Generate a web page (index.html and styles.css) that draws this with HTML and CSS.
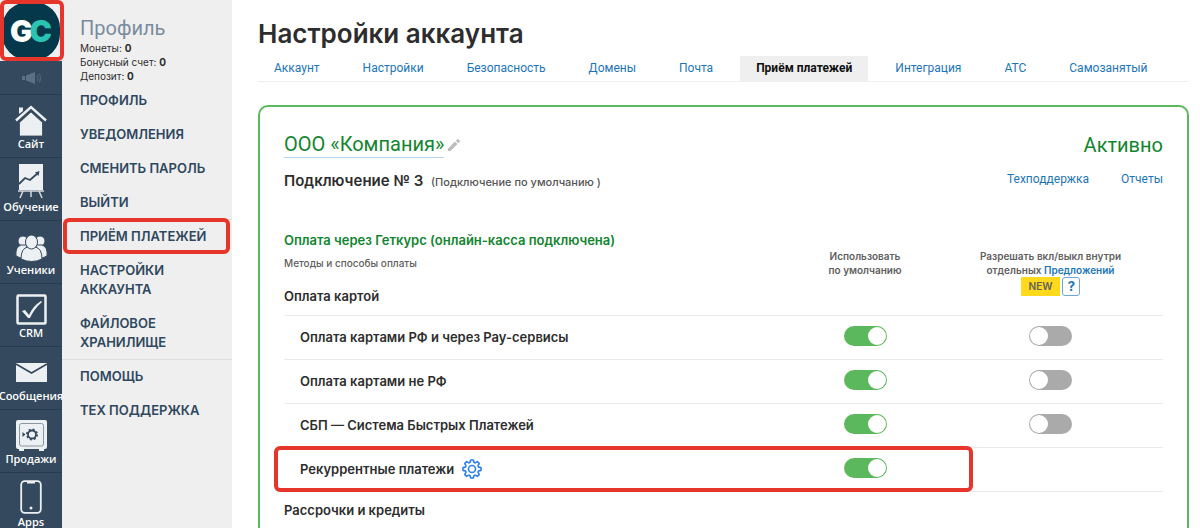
FILE: index.html
```html
<!DOCTYPE html>
<html lang="ru">
<head>
<meta charset="utf-8">
<meta name="viewport" content="width=device-width, initial-scale=1">
<title>Настройки аккаунта</title>
<link rel="stylesheet" href="styles.css">
</head>
<body>
<div class="app">
  <nav class="rail" aria-label="Разделы">
    <a class="logo marked" href="#"><span class="logo-disc"><span class="logo-g">G</span><span class="logo-c">C</span></span></a>
    <a class="rail-news" href="#" aria-label="Новости">
      <svg width="20" height="14" viewBox="0 0 20 14" fill="#5b7087"><path d="M1 5h3v4H1zM5 4.500L14 1v12L5 9.500z"/><path d="M16 4q2 3 0 6M18 2.500q3 4.500 0 9" fill="none" stroke="#4c6279" stroke-width="1.300"/></svg>
    </a>
    <a class="rail-item" href="#">
      <svg width="32" height="31" viewBox="0 0 32 31" fill="#edf0f2"><path d="M4 9V2.500h4V6z"/><path d="M1 15.500L16 2l15 13.500" fill="none" stroke="#edf0f2" stroke-width="2.400"/><path d="M4.500 17.500L16 7l11.500 10.500V31h-23z" stroke="#34495e" stroke-width=".8"/></svg>
      Сайт</a>
    <a class="rail-item" href="#">
      <svg width="26" height="36" viewBox="0 0 26 36"><path d="M1 1h24v26H1z" fill="#edf0f2"/><path d="M1 21l6-6 5 2 8-7" fill="none" stroke="#34495e" stroke-width="1.800"/><path d="M21.500 8l-1 5-3.500-3.500z" fill="#34495e"/><path d="M0 28h26M5 28l-3 7M13 28v6M21 28l3 7" fill="none" stroke="#d5dadf" stroke-width="1.500"/></svg>
      Обучение</a>
    <a class="rail-item" href="#">
      <svg width="33" height="28" viewBox="0 0 33 28" fill="#edf0f2" stroke="#34495e" stroke-width="1"><circle cx="8" cy="7" r="5"/><circle cx="25" cy="7" r="5"/><path d="M1 22q-1-9 5-11h6v13q-7 1-11-2zM32 22q1-9-5-11h-6v13q7 1 11-2z"/><path d="M6 25q0-11 7-12h7q7 1 7 12-10 5-21 0z"/><ellipse cx="16.500" cy="8" rx="6" ry="7"/></svg>
      Ученики</a>
    <a class="rail-item" href="#">
      <svg width="31" height="31" viewBox="0 0 31 31"><rect x="1.500" y="1.500" width="28" height="28" rx="1" fill="none" stroke="#edf0f2" stroke-width="2.500"/><path d="M6 17l3-1 4 5Q17 12 25 7l1 1Q18 15 14 24h-2z" fill="#edf0f2"/></svg>
      CRM</a>
    <a class="rail-item" href="#">
      <svg class="icon-mail" width="31" height="19" viewBox="0 0 31 19"><path d="M0 0h31v19H0z" fill="#edf0f2"/><path d="M0 1l15.500 9L31 1" fill="none" stroke="#34495e" stroke-width="1.600"/></svg>
      Сообщения</a>
    <a class="rail-item" href="#">
      <svg width="31" height="31" viewBox="0 0 31 31"><path d="M2 0h27q2 0 2 2v25q0 2-2 2h-1v2h-5v-2H8v2H3v-2H2q-2 0-2-2V2q0-2 2-2z" fill="#edf0f2"/><rect x="3.500" y="3.500" width="24" height="22.500" rx="2" fill="none" stroke="#8895a3" stroke-width="1"/><circle cx="16" cy="14.500" r="4" fill="none" stroke="#34495e" stroke-width="1.800"/><circle cx="16" cy="14.500" r="5.200" fill="none" stroke="#34495e" stroke-width="1.600" stroke-dasharray="2 2.080"/><path d="M6.500 12l3 2.500-3 2.500z" fill="#34495e"/></svg>
      Продажи</a>
    <a class="rail-item" href="#">
      <svg width="22" height="34" viewBox="0 0 22 34"><rect x="1.200" y="1.200" width="19.600" height="31.600" rx="3.500" fill="none" stroke="#edf0f2" stroke-width="1.800"/><path d="M7 1h8v2.500H7z" fill="#edf0f2"/><circle cx="11" cy="28" r="1.500" fill="#edf0f2"/></svg>
      Apps</a>
  </nav>

  <aside class="profile">
    <h2 class="profile-title">Профиль</h2>
    <p class="balance">Монеты: <b>0</b></p>
    <p class="balance">Бонусный счет: <b>0</b></p>
    <p class="balance">Депозит: <b>0</b></p>
    <ul class="menu">
      <li><a href="#">Профиль</a></li>
      <li><a href="#">Уведомления</a></li>
      <li><a href="#">Сменить пароль</a></li>
      <li><a href="#">Выйти</a></li>
      <li class="ruled marked"><a href="#">Приём платежей</a></li>
      <li><a href="#">Настройки аккаунта</a></li>
      <li><a href="#">Файловое хранилище</a></li>
      <li class="ruled"><a href="#">Помощь</a></li>
      <li><a href="#">Тех поддержка</a></li>
    </ul>
  </aside>

  <main class="main">
    <h1 class="page-title">Настройки аккаунта</h1>
    <nav class="tabs" aria-label="Настройки">
      <a href="#">Аккаунт</a>
      <a href="#">Настройки</a>
      <a href="#">Безопасность</a>
      <a href="#">Домены</a>
      <a href="#">Почта</a>
      <a class="active" href="#" aria-current="page">Приём платежей</a>
      <a href="#">Интеграция</a>
      <a href="#">АТС</a>
      <a href="#">Самозанятый</a>
    </nav>

    <section class="card">
      <header class="card-head">
        <div class="company">
          <a class="company-name" href="#">ООО «Компания»</a>
          <button class="icon-button" type="button" aria-label="Переименовать"><svg width="12" height="12" viewBox="0 0 12 12" fill="#bdbdbd"><path d="M0 9.500L7 2.500 9.500 5l-7 7H0zM7.800 1.700L9.300.2q.5-.4 1 0l1.500 1.500q.4.500 0 1l-1.500 1.500z"/></svg></button>
        </div>
        <span class="status">Активно</span>
      </header>
      <div class="card-sub">
        <h3 class="connection">Подключение № 3 <small>(Подключение по умолчанию )</small></h3>
        <div class="links"><a href="#">Техподдержка</a><a href="#">Отчеты</a></div>
      </div>
      <h4 class="provider">Оплата через Геткурс (онлайн-касса подключена)</h4>

      <table class="methods">
        <colgroup><col><col class="col-default"><col class="col-offers"></colgroup>
        <thead>
          <tr>
            <th class="group-head" scope="col"><span class="caption">Методы и способы оплаты</span><span class="group">Оплата картой</span></th>
            <th scope="col">Использовать<br>по умолчанию</th>
            <th scope="col">Разрешать вкл/выкл внутри<br>отдельных <a href="#">Предложений</a>
              <span class="badges"><span class="badge">NEW</span><button class="help" type="button">?</button></span></th>
          </tr>
        </thead>
        <tbody>
          <tr>
            <th scope="row">Оплата картами РФ и через Pay-сервисы</th>
            <td><input class="toggle" type="checkbox" checked aria-label="Использовать по умолчанию: карты РФ"></td>
            <td><input class="toggle" type="checkbox" aria-label="Разрешать в предложениях: карты РФ"></td>
          </tr>
          <tr>
            <th scope="row">Оплата картами не РФ</th>
            <td><input class="toggle" type="checkbox" checked aria-label="Использовать по умолчанию: карты не РФ"></td>
            <td><input class="toggle" type="checkbox" aria-label="Разрешать в предложениях: карты не РФ"></td>
          </tr>
          <tr>
            <th scope="row">СБП — Система Быстрых Платежей</th>
            <td><input class="toggle" type="checkbox" checked aria-label="Использовать по умолчанию: СБП"></td>
            <td><input class="toggle" type="checkbox" aria-label="Разрешать в предложениях: СБП"></td>
          </tr>
          <tr class="marked-row">
            <th scope="row"><span class="with-icon">Рекуррентные платежи
              <button class="icon-button" type="button" aria-label="Настроить"><svg width="20" height="20" viewBox="0 0 20 20" fill="none" stroke="#2f80ed" stroke-width="1.600" stroke-linejoin="round"><circle cx="10" cy="10" r="3.500"/><path d="M8.600 1h2.800l.5 2.300 1.400.6 2-1.300 2 2-1.300 2 .6 1.500 2.400.5v2.800l-2.400.5-.6 1.500 1.300 2-2 2-2-1.300-1.400.6-.5 2.300H8.600l-.5-2.300-1.400-.6-2 1.300-2-2 1.300-2-.6-1.500L1 11.400V8.600l2.400-.5L4 6.600l-1.300-2 2-2 2 1.300 1.400-.6z"/></svg></button></span></th>
            <td><input class="toggle" type="checkbox" checked aria-label="Использовать по умолчанию: рекуррентные платежи"></td>
            <td></td>
          </tr>
          <tr>
            <th class="group-row" scope="rowgroup" colspan="3">Рассрочки и кредиты</th>
          </tr>
        </tbody>
      </table>
    </section>
  </main>
</div>
</body>
</html>
```
FILE: styles.css
```css
* { box-sizing: border-box; }

body {
  margin: 0;
  background: #fff;
  color: #2d2d2d;
  font-family: Inter, "Open Sans", sans-serif;
  font-size: 13px;
}

h1, h2, h3, h4, p, ul { margin: 0; padding: 0; }
ul { list-style: none; }
a { color: #1b75b9; text-decoration: none; }

.app {
  display: grid;
  grid-template-columns: 62px 170px minmax(0, 1fr);
  height: 100vh;
  overflow: hidden;
}

/* Red frame around highlighted elements */
.marked, .marked-row { position: relative; }
.marked::after, .marked-row .with-icon::after {
  content: "";
  position: absolute;
  border: 4px solid #e6352b;
  border-radius: 6px;
  pointer-events: none;
}

/* Icon rail */
.rail { background: #34495e; }
.logo {
  display: grid;
  place-items: center;
  height: 61px;
  background: #efefef;
}
.logo::after { inset: 0 -2px 0 0; z-index: 1; }
.logo-disc {
  display: flex;
  align-items: center;
  justify-content: center;
  width: 58px;
  height: 58px;
  border-radius: 26px;
  background: #04384a;
  font-size: 30px;
  font-weight: 900;
}
.logo-g { color: #fff; }
.logo-c { margin-left: -3px; color: #2bc4b3; }
.rail-news {
  display: grid;
  place-items: center;
  height: 33px;
}
.rail-item {
  display: flex;
  flex-direction: column;
  align-items: center;
  justify-content: flex-end;
  height: 63px;
  padding-bottom: 5px;
  border-top: 1px solid #293c4f;
  color: #fff;
  font: 600 11px/16px "Open Sans", sans-serif;
}
.icon-mail { margin-bottom: 6px; }

/* Profile menu */
.profile { background: #efefef; padding-top: 16px; }
.profile-title {
  padding-left: 18px;
  color: #7b8b9e;
  font: 20px/25px Roboto, sans-serif;
}
.balance { padding-left: 18px; font-size: 10px; line-height: 14px; }
.menu li { border-top: 1px solid transparent; }
.menu .ruled { border-color: #dedede; }
.menu a {
  display: block;
  padding: 7px 20px 7px 18px;
  color: #2f4860;
  font-size: 13px;
  font-weight: 600;
  line-height: 19px;
  text-transform: uppercase;
}
.menu .marked::after { inset: -2px 2px -1px 1px; }

/* Main column */
.main { padding: 16px 11px 0 26px; }
.page-title { font-size: 26px; font-weight: 600; line-height: 36px; }
.tabs {
  display: flex;
  gap: 11px;
  margin-top: 4px;
  border-bottom: 1px solid #efefef;
  white-space: nowrap;
}
.tabs a { padding: 0 16px; font: 12px/25px Roboto, sans-serif; }
.tabs .active { background: #efefef; color: #111; font-weight: 700; }

.card {
  margin-top: 23px;
  padding: 24px;
  border: 2px solid #5cb85c;
  border-radius: 10px;
}
.card-head, .card-sub {
  display: flex;
  align-items: center;
  justify-content: space-between;
}
.company { display: flex; align-items: center; gap: 4px; }
.company-name, .status { color: #12852f; font: 20px/26px Roboto, sans-serif; }
.company-name { border-bottom: 1px solid #b5d5ee; }
.icon-button {
  display: flex;
  padding: 0;
  border: 0;
  background: none;
}
.card-sub { margin-top: 10px; }
.connection { font-size: 15px; font-weight: 600; line-height: 26px; }
.connection small { margin-left: 4px; color: #555; font-size: 11px; font-weight: 500; }
.links {
  display: flex;
  gap: 32px;
  padding-bottom: 6px;
  font: 12px/16px Roboto, sans-serif;
}
.provider {
  margin-top: 36px;
  color: #12852f;
  font-size: 13px;
  font-weight: 600;
  line-height: 18px;
}

/* Payment methods */
.methods { width: 100%; border-collapse: collapse; table-layout: fixed; }
.col-default { width: 146px; }
.col-offers { width: 225px; }
.methods td { padding: 0; text-align: center; vertical-align: middle; }
.methods thead th {
  height: 66px;
  padding: 0;
  color: #606060;
  font-size: 10px;
  font-weight: 600;
  line-height: 14px;
  vertical-align: top;
}
.methods thead .group-head { padding-top: 7px; text-align: left; }
.caption, .group { display: block; }
.caption { font-weight: 500; }
.group {
  margin-top: 17px;
  color: #2d2d2d;
  font-size: 13px;
  line-height: 18px;
}
.badges { display: flex; justify-content: center; gap: 2px; }
.badge {
  padding: 0 8px;
  background: #ffd91a;
  line-height: 19px;
}
.help {
  width: 18px;
  height: 19px;
  padding: 0;
  border: 1px solid #6aa7d8;
  border-radius: 3px;
  background: #fff;
  color: #1b75b9;
  font: 700 13px/17px Inter, sans-serif;
}
.methods tbody tr { height: 44px; border-top: 1px solid #ebebeb; }
.methods tbody th {
  padding: 0 0 0 16px;
  font-size: 13px;
  font-weight: 600;
  text-align: left;
}
.methods tbody .group-row { padding: 0 0 6px; }
.methods .with-icon::after { inset: -2px 190px -1px -10px; }
.with-icon { display: flex; align-items: center; gap: 8px; }

.toggle {
  appearance: none;
  display: block;
  width: 43px;
  height: 20px;
  margin: 0 auto 3px;
  padding: 1px;
  border-radius: 10px;
  background: #aaa;
}
.toggle::before {
  content: "";
  display: block;
  width: 18px;
  height: 18px;
  border-radius: 50%;
  background: #fff;
}
.toggle:checked { background: #5cb85c; }
.toggle:checked::before { margin-left: auto; }
```
